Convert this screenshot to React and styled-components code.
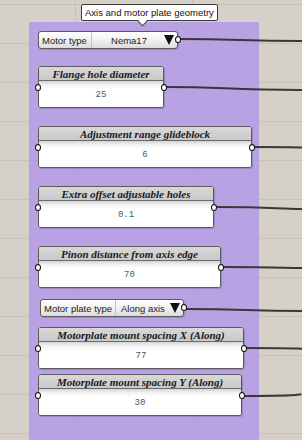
import React from 'react';
import styled, { createGlobalStyle } from 'styled-components';

const Global = createGlobalStyle`
  html, body { margin: 0; padding: 0; }
  body { width: 302px; height: 440px; overflow: hidden; }
`;

const Canvas = styled.div`
  position: relative;
  width: 302px;
  height: 440px;
  overflow: hidden;
  background-color: #d5d1c9;
  background-image:
    linear-gradient(to bottom, transparent 0, transparent 4px, #c6c2ba 4px, #c6c2ba 5px, transparent 5px),
    linear-gradient(to right, transparent 0, transparent 75px, #c6c2ba 75px, #c6c2ba 76px, transparent 76px);
  background-size: 302px 39px, 117px 440px;
  background-repeat: repeat;
  padding-top: 22px;
  padding-left: 29px;
  box-sizing: border-box;
`;

const Group = styled.div`
  width: 230px;
  height: 440px;
  background: rgba(178, 151, 234, 0.82);
  padding: 9px 0 0 9px;
  box-sizing: border-box;
  display: flex;
  flex-direction: column;
  align-items: flex-start;
`;

const Tooltip = styled.div`
  position: absolute;
  left: 81px;
  top: 4px;
  height: 15px;
  padding: 0 3px;
  display: flex;
  align-items: center;
  background: #fff;
  border: 1px solid #3a3a3a;
  border-radius: 2px;
  font-family: "Liberation Sans", Arial, sans-serif;
  font-size: 9.5px;
  color: #111;
  white-space: nowrap;
  z-index: 3;
  &::after {
    content: '';
    position: absolute;
    left: 57px;
    bottom: -5px;
    width: 6px;
    height: 6px;
    background: #fff;
    border-right: 1px solid #3a3a3a;
    border-bottom: 1px solid #3a3a3a;
    transform: rotate(45deg);
  }
`;

const Dropdown = styled.div`
  position: relative;
  margin-top: ${p => p.$top}px;
  margin-left: ${p => p.$left || 0}px;
  width: ${p => p.$width}px;
  height: 18px;
  box-sizing: border-box;
  border: 1px solid #5a5a5a;
  border-radius: 3px;
  background: linear-gradient(to bottom, #ffffff 0%, #f1f1f1 50%, #dcdcdc 100%);
  box-shadow: 1px 1px 1px rgba(0, 0, 0, 0.15);
  display: flex;
  align-items: center;
  font-family: "Liberation Sans", Arial, sans-serif;
  font-size: 9.5px;
  color: #1a1a1a;
`;

const DropLabel = styled.div`
  width: ${p => p.$width}px;
  flex: none;
  height: 100%;
  padding-left: 3px;
  box-sizing: border-box;
  display: flex;
  align-items: center;
  border-right: 1px solid #c4c4c4;
  white-space: nowrap;
  overflow: hidden;
`;

const DropValue = styled.div`
  flex: 1;
  text-align: ${p => p.$align || 'center'};
  padding-left: ${p => p.$pad || 0}px;
  white-space: nowrap;
`;

const Arrow = styled.div`
  width: 0;
  height: 0;
  margin-right: 3px;
  border-left: 5px solid transparent;
  border-right: 5px solid transparent;
  border-top: 10px solid #111;
`;

const Panel = styled.div`
  position: relative;
  margin-top: ${p => p.$top}px;
  width: ${p => p.$width}px;
  height: 42px;
  box-sizing: border-box;
  border: 1px solid #5a5a5a;
  border-radius: 3px;
  background: #fff;
  box-shadow: 1px 1px 1px rgba(0, 0, 0, 0.18);
  display: flex;
  flex-direction: column;
`;

const Header = styled.div`
  height: 13px;
  flex: none;
  background: linear-gradient(to bottom, #d8d8d8, #c9c9c9);
  border-bottom: 1px solid #6a6a6a;
  border-radius: 2px 2px 0 0;
  display: flex;
  align-items: center;
  justify-content: center;
  font-family: "Liberation Serif", "Times New Roman", serif;
  font-weight: bold;
  font-style: italic;
  font-size: 11px;
  color: #1a1a1a;
  white-space: nowrap;
`;

const Body = styled.div`
  flex: 1;
  padding-top: 2px;
  background: linear-gradient(to bottom, #d4d4d4 0, #f4f4f4 4px, #ffffff 8px, #ffffff 100%);
  border-radius: 0 0 2px 2px;
  display: flex;
  align-items: center;
  justify-content: center;
  font-family: "Liberation Mono", "Courier New", monospace;
  font-size: 9px;
  color: #3e6262;
`;

const Port = styled.div`
  position: absolute;
  top: ${p => p.$y}px;
  ${p => (p.$side === 'left' ? 'left: -4px;' : 'right: -4px;')}
  width: 4px;
  height: 5px;
  border: 1.5px solid #111;
  border-radius: 50%;
  background: #fff;
  z-index: 2;
`;

const Wires = styled.svg`
  position: absolute;
  left: 0;
  top: 0;
  width: 302px;
  height: 440px;
  pointer-events: none;
  z-index: 1;
`;

const wires = [
  { x: 180, y1: 39, y2: 41 },
  { x: 166, y1: 87, y2: 90 },
  { x: 254, y1: 147, y2: 148 },
  { x: 215, y1: 207, y2: 209 },
  { x: 222, y1: 267, y2: 268 },
  { x: 186, y1: 309, y2: 311 },
  { x: 245, y1: 348, y2: 349 },
  { x: 243, y1: 396, y2: 394 },
];

const panels = [
  { title: 'Flange hole diameter', value: '25', width: 126, top: 17 },
  { title: 'Adjustment range glideblock', value: '6', width: 214, top: 18 },
  { title: 'Extra offset adjustable holes', value: '0.1', width: 176, top: 18 },
  { title: 'Pinon distance from axis edge', value: '70', width: 183, top: 18 },
];

const panels2 = [
  { title: 'Motorplate mount spacing X (Along)', value: '77', width: 206, top: 10 },
  { title: 'Motorplate mount spacing Y (Along)', value: '30', width: 204, top: 5 },
];

const ValuePanel = ({ title, value, width, top }) => (
  <Panel $width={width} $top={top}>
    <Port $side="left" $y={17} />
    <Header>{title}</Header>
    <Body>{value}</Body>
    <Port $side="right" $y={17} />
  </Panel>
);

export default function App() {
  return (
    <>
      <Global />
      <Canvas>
        <Tooltip>Axis and motor plate geometry</Tooltip>
        <Wires viewBox="0 0 302 440">
          {wires.map((w, i) => (
            <path
              key={i}
              d={`M${w.x} ${w.y1} C ${w.x + 60} ${w.y1}, ${w.x + 60} ${w.y2}, 302 ${w.y2}`}
              stroke="#383838"
              strokeWidth="2"
              fill="none"
            />
          ))}
        </Wires>
        <Group>
          <Dropdown $width={140} $top={0}>
            <DropLabel $width={53}>Motor type</DropLabel>
            <DropValue $pad={2}>Nema17</DropValue>
            <Arrow />
            <Port $side="right" $y={4} />
          </Dropdown>
          {panels.map(p => (
            <ValuePanel key={p.title} {...p} />
          ))}
          <Dropdown $width={144} $top={11} $left={2}>
            <DropLabel $width={75}>Motor plate type</DropLabel>
            <DropValue $align="left" $pad={5}>Along axis</DropValue>
            <Arrow />
            <Port $side="right" $y={4} />
          </Dropdown>
          {panels2.map(p => (
            <ValuePanel key={p.title} {...p} />
          ))}
        </Group>
      </Canvas>
    </>
  );
}
